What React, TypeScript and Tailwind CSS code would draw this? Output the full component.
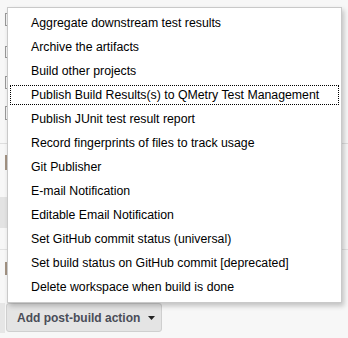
import React from 'react';

const actions: string[] = [
  'Aggregate downstream test results',
  'Archive the artifacts',
  'Build other projects',
  'Publish Build Results(s) to QMetry Test Management',
  'Publish JUnit test result report',
  'Record fingerprints of files to track usage',
  'Git Publisher',
  'E-mail Notification',
  'Editable Email Notification',
  'Set GitHub commit status (universal)',
  'Set build status on GitHub commit [deprecated]',
  'Delete workspace when build is done',
];

const Bracket: React.FC<{ className: string }> = ({ className }) => (
  <div className={`ml-[5px] w-[3px] border-l border-y border-[#9a9a9a] ${className}`} />
);

const App: React.FC = () => {
  const focused = 3;

  return (
    <div className="relative w-[348px] h-[338px] overflow-hidden bg-[#f7f7f7] font-['Liberation_Sans',Arial,sans-serif]">
      {/* form rows behind the menu */}
      <div className="flex flex-col">
        <Bracket className="mt-[13px] h-[13px]" />
        <Bracket className="mt-[20px] h-[12px]" />
        <Bracket className="mt-[18px] h-[13px]" />
        <Bracket className="mt-[17px] h-[14px]" />
        <div className="mt-[23px] h-px w-full bg-[#dedede]" />
        <div className="mt-[11px] ml-[5px] h-[15px] w-[2px] bg-[#a39383]" />
        <div className="mt-[27px] h-[31px] w-[8px] bg-[#e3e3e3]" />
        <div className="mt-[21px] h-px w-full bg-[#e2e2e2]" />
        <div className="mt-[12px] ml-[5px] h-[13px] w-[2px] bg-[#a39383]" />
        <div className="mt-[28px] flex items-start">
          <div className="h-[30px] w-[5px] bg-[#e6e6e6]" />
          <button className="ml-px flex h-[29px] w-[156px] items-center rounded-[3px] border border-[#cfcfcf] bg-[#e4e4e4] pl-[10px] text-[12px] font-bold text-[#4a4d58]">
            <span>Add post-build action</span>
            <svg width="7" height="4" viewBox="0 0 7 4" className="ml-[8px]">
              <path d="M0 0h7L3.5 4z" fill="#222" />
            </svg>
          </button>
        </div>
      </div>

      {/* dropdown menu */}
      <div className="absolute left-[7px] top-[7px] w-[335px] border border-[#c9c9c9] bg-white pt-[3px] pb-[3px] shadow-[2px_3px_5px_rgba(0,0,0,0.22)]">
        {actions.map((label, i) => (
          <div key={label} className="h-[24px] px-[2px] py-[2px]">
            <div
              className={`flex h-[20px] items-center pl-[20px] text-[12.3px] text-black border ${
                i === focused ? 'border-dotted border-black' : 'border-transparent'
              }`}
            >
              {label}
            </div>
          </div>
        ))}
      </div>
    </div>
  );
};

export default App;
